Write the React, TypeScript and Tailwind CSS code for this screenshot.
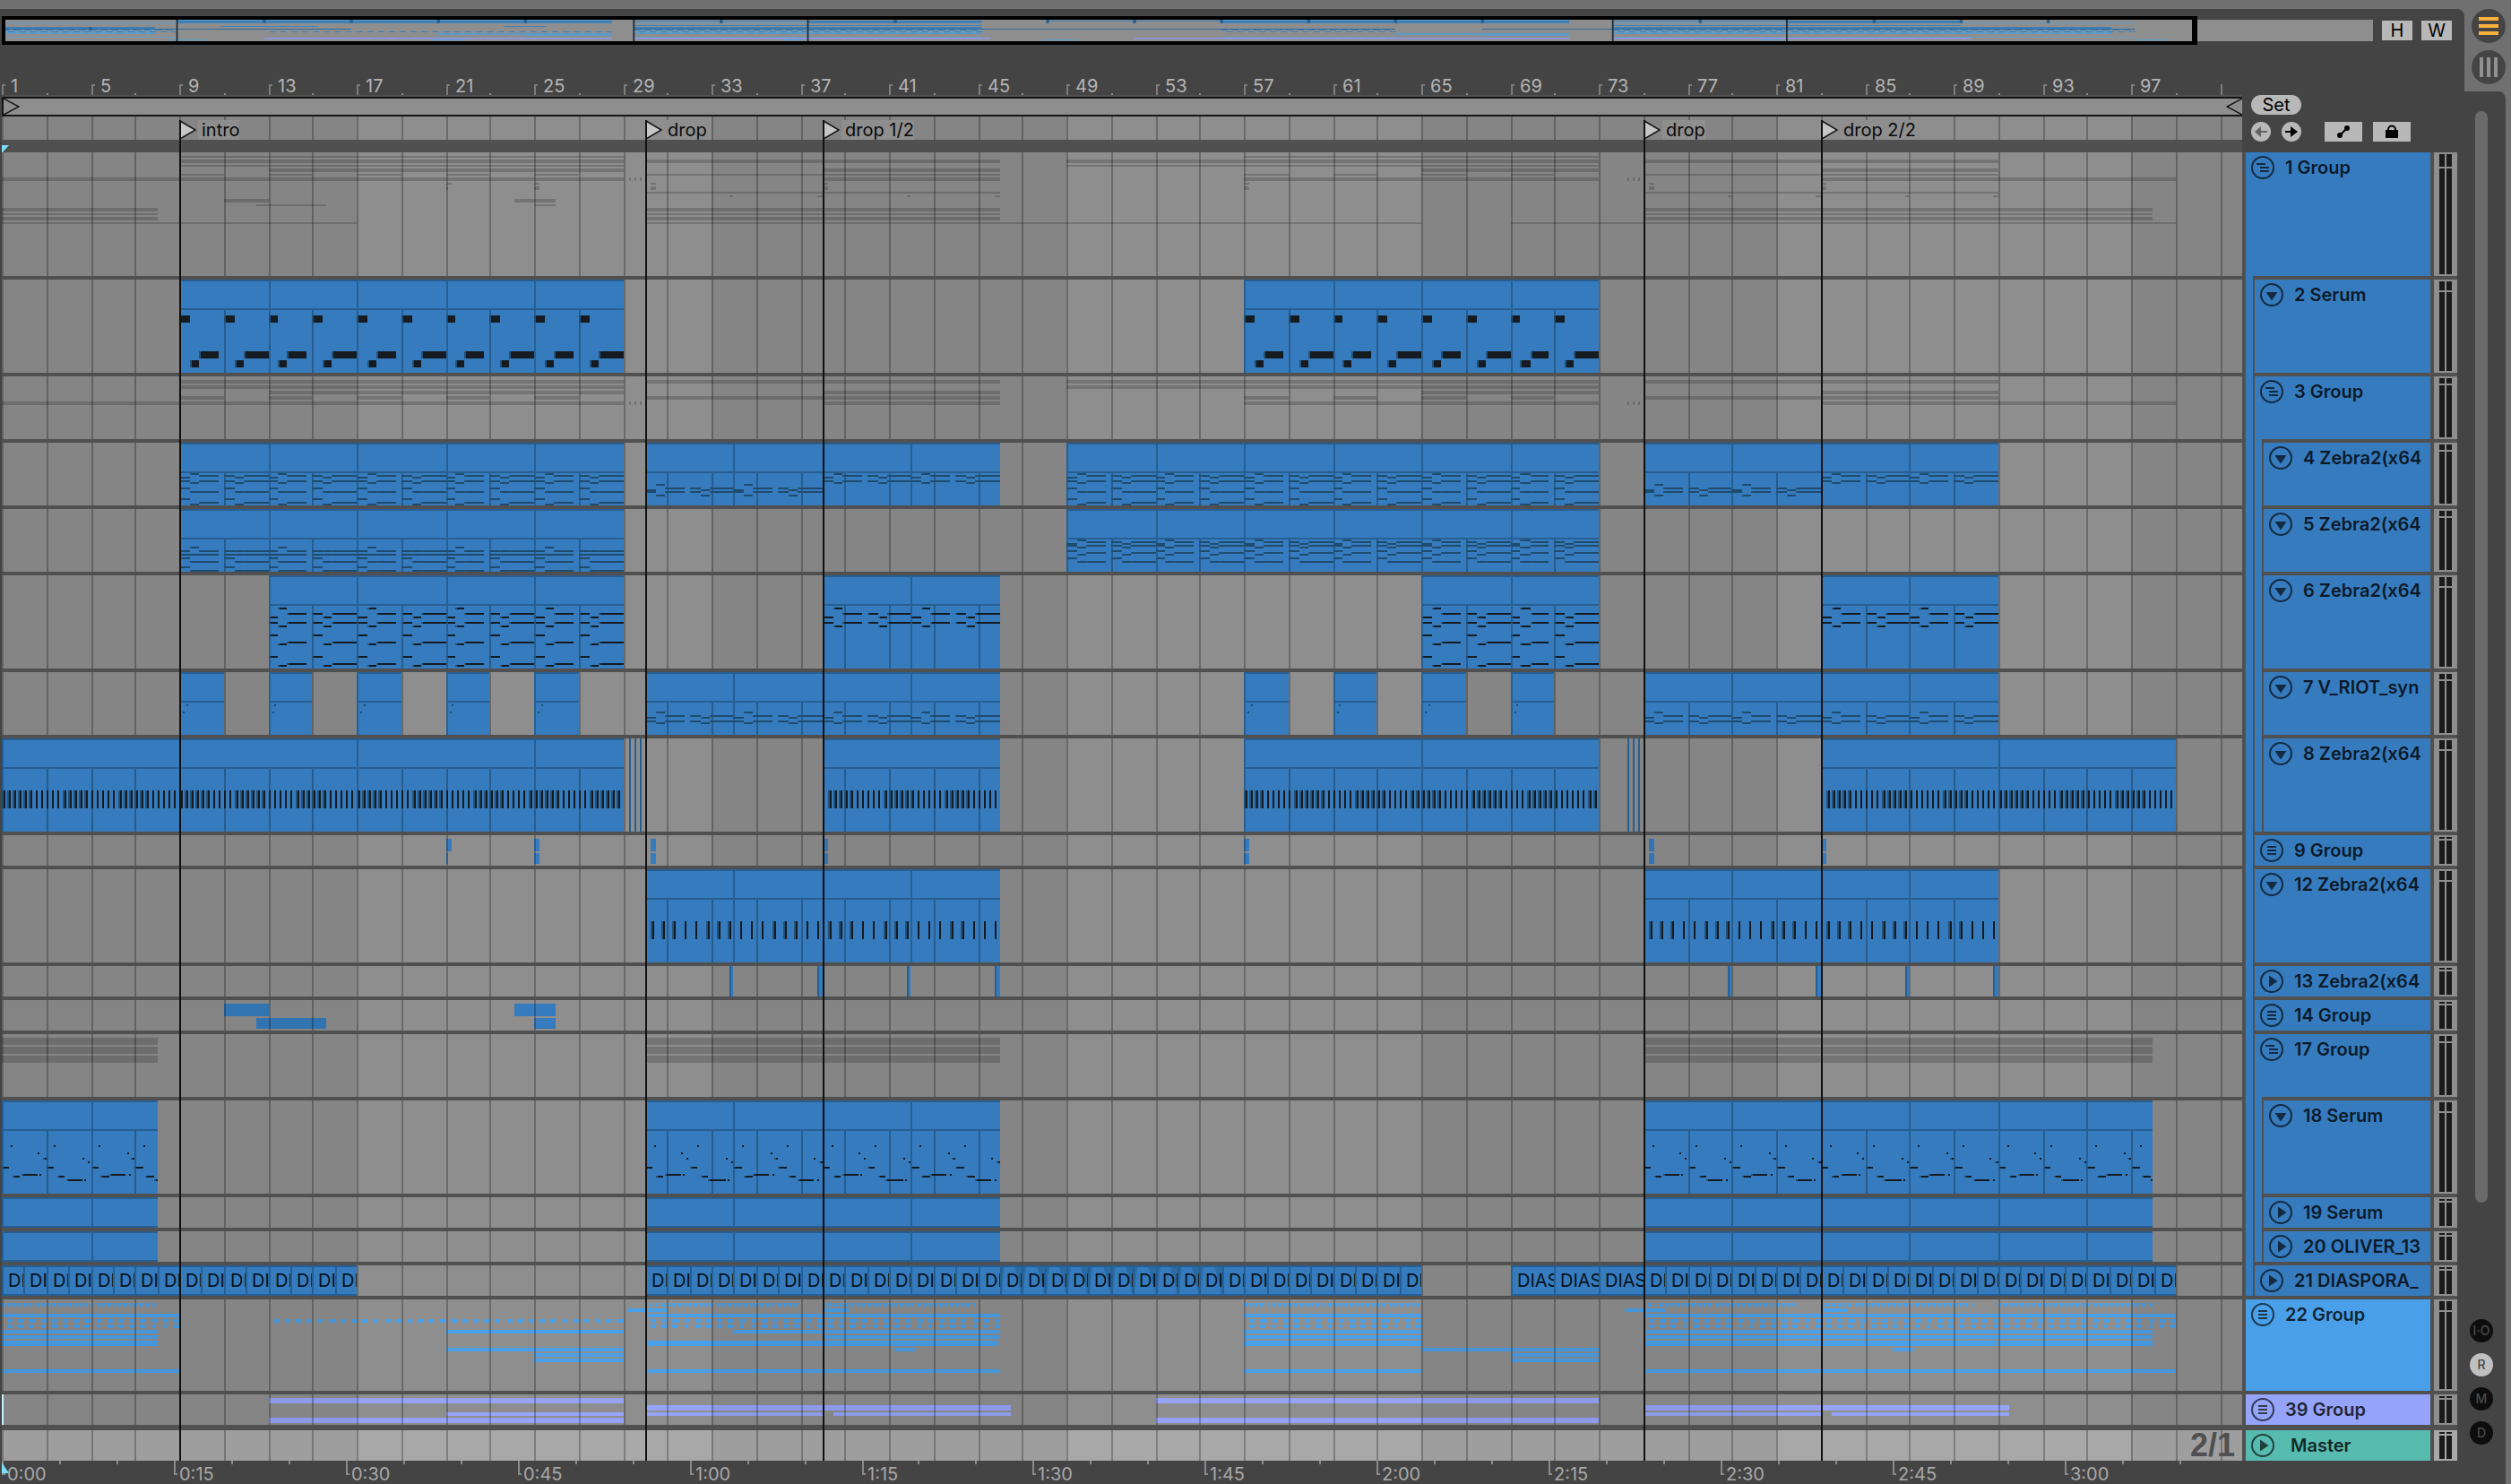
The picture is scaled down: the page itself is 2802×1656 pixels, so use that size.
import type { ReactNode } from "react";
import clsx from "clsx";

// --- Types ---
type Span = [number, number];
type Size = "xl" | "tall" | "big" | "mid" | "low";
type IconKind = "open" | "folded" | "down" | "play";

interface Note {
  start: number;
  end: number;
  y: number;
  h: number;
}

interface Bar {
  start: number;
  end: number;
  y: number;
  h: number;
}

interface Track {
  id: string;
  name: string;
  size: Size;
  icon: IconKind;
  color?: string;
  clips?: Span[];
  clipBars?: number;
  notes?: Note[];
  noteColor?: string;
  bars?: Bar[];
  barColor?: string;
  audio?: boolean;
  slivers?: Span[];
  children?: Track[];
}

// --- Time grid ---
const PX_PER_BAR = 24.755;
const LAST_BAR = 101;

// everything on the grid sits on even pixels
const toX = (bar: number) => 2 * Math.round(((bar - 1) * PX_PER_BAR) / 2);

const range = (from: number, to: number, step = 1) => {
  const out: number[] = [];
  for (let v = from; v < to - 0.001; v += step) out.push(v);
  return out;
};

const HEIGHTS: Record<Size, string> = {
  xl: "h-[138px]",
  tall: "h-[104px]",
  big: "h-[102px]",
  mid: "h-[70px]",
  low: "h-[34px]",
};

const METER_TOPS: Record<Size, string> = {
  xl: "h-3.5",
  tall: "h-2.5",
  big: "h-2.5",
  mid: "h-1.5",
  low: "h-0.5",
};

// --- Note patterns ---
const RIFF: Span[] = [
  [0, 0.47],
  [0.47, 0.875],
  [0.875, 1.75],
  [2, 2.47],
  [2.47, 2.875],
  [2.875, 4],
];

const riff = (from: number, to: number, rows: number[][], h = 2): Note[] =>
  range(from, to, 4).flatMap((bar) =>
    RIFF.flatMap(([s, e], i) => rows[i].map((y) => ({ start: bar + s, end: Math.min(bar + e, to), y, h })))
  );

const pulses = (from: number, to: number, step: number): Note[] =>
  range(from, to, step).map((start) => ({ start, end: start + 0.125, y: 58, h: 20 }));

const LEAD: [number, number, number][] = [
  [0, 0.35, 74], [0.38, 0.45, 50], [0.47, 0.83, 84], [0.87, 1.6, 82], [1.64, 1.72, 58], [1.72, 1.8, 82], [1.85, 1.98, 64],
  [2, 2.35, 74], [2.36, 2.45, 50], [2.47, 2.83, 84], [2.87, 3.6, 88], [3.62, 3.7, 64], [3.72, 3.8, 88], [3.86, 3.99, 68],
];

const lead = (from: number, to: number): Note[] =>
  range(from, to, 4).flatMap((bar) =>
    LEAD.filter(([s]) => bar + s < to).map(([s, e, y]) => ({ start: bar + s, end: Math.min(bar + e, to), y, h: 2 }))
  );

const blips = (bars: number[]): Note[] =>
  bars.flatMap((bar) => [
    { start: bar + 0.16, end: bar + 0.22, y: 44, h: 2 },
    { start: bar + 0.3, end: bar + 0.36, y: 36, h: 2 },
  ]);

const CHORDS_4 = [[38, 42, 50, 62], [34, 44, 54, 68], [36, 42, 54, 66], [36, 42, 50, 62], [38, 44, 54, 68], [36, 42, 54, 66]];
const CHORDS_4_DROP = [[52, 54], [46, 58], [50, 54], [50, 54], [52, 58], [50, 54]];
const CHORDS_4_TOP = [[38, 42], [34, 44], [36, 42], [36, 42], [38, 44], [36, 42]];
const CHORDS_5 = [[46, 50, 54, 64], [42, 50, 58, 68], [46, 50, 58, 68], [46, 50, 54, 64], [46, 50, 58, 68], [46, 50, 58, 68]];
const CHORDS_5_HIGH = [[38, 40, 46, 54], [34, 42, 50, 58], [36, 40, 48, 58], [36, 40, 46, 54], [38, 42, 50, 58], [36, 40, 48, 58]];
const CHORDS_6 = [[46, 52, 66, 90], [36, 56, 76, 100], [42, 52, 74, 98], [42, 52, 66, 90], [46, 56, 76, 100], [42, 52, 74, 98]];
const CHORDS_6_TOP = [[46, 52], [36, 56], [42, 52], [42, 52], [46, 56], [42, 52]];
const CHORDS_7 = [[50, 54], [44, 56], [48, 54], [48, 54], [50, 56], [48, 54]];
const BASS = [[40], [90], [80], [40], [90], [80]];

// --- Where each track plays ---
const T2: Span[] = [[9, 29], [57, 73]];
const T4: Span[] = [[9, 29], [30, 46], [49, 73], [75, 91]];
const T5: Span[] = [[9, 29], [49, 73]];
const T6: Span[] = [[13, 29], [38, 46], [65, 73], [83, 91]];
const STABS = [9, 13, 17, 21, 25, 57, 61, 65, 69];
const T7: Span[] = [...STABS.map((b): Span => [b, b + 2]), [30, 46], [75, 91]];
const T8: Span[] = [[1, 29], [38, 46], [57, 73], [83, 99]];
const FILLS: Span[] = [29.25, 29.5, 29.75, 74.25, 74.5, 74.75].map((b): Span => [b, b + 0.08]);
const T10: Span[] = [[21, 21.25], [25, 25.25], [30.24, 30.47], [38, 38.24], [57, 57.2], [75.24, 75.47], [83, 83.24]];
const T11: Span[] = [[21, 21.15], [25, 25.25], [30.24, 30.47], [38, 38.24], [57, 57.2], [75.24, 75.47], [83, 83.24]];
const T12: Span[] = [[30, 46], [75, 91]];
const T13: Span[] = [34, 38, 42, 46, 79, 83, 87, 91].map((b): Span => [b - 0.22, b]);
const T15: Span[] = [[11, 13], [24.1, 25.93]];
const T16: Span[] = [[12.45, 15.6], [25, 25.93]];
const T18: Span[] = [[1, 8], [30, 46], [75, 97.93]];
const T21: Span[] = [[1, 17], [30, 65], [69, 99]];

const stack = (rows: [Span[], number, number][]): Bar[] =>
  rows.flatMap(([spans, y, h]) => spans.map(([start, end]) => ({ start, end, y, h })));

const dashes = (spans: Span[], offset: number, step: number, width: number): Span[] =>
  spans.flatMap(([s, e]) => range(s + offset, e, step).map((b): Span => [b, b + width]));

const DRUMS: Span[] = [[1, 9], [30, 46], [57, 65], [75, 99]];

const PALE_BARS = stack([
  [dashes([[1, 8], [30.2, 36.8], [38, 44.8], [57, 65], [75.2, 81.9], [83, 89.9], [91, 98]], 0, 0.25, 0.16), 4, 4],
  [[[29.2, 31], [38, 39.2], [74.2, 76], [83, 84.2]], 10, 4],
  [DRUMS, 16, 4],
  [dashes([...DRUMS, [13, 29]], 0.25, 0.5, 0.25), 22, 4],
  [dashes(DRUMS, 0.25, 0.5, 0.22), 28, 4],
  [[[1, 8], [21, 29], [34, 46], [57, 65], [75, 97.93]], 34, 4],
  [[[1, 8], [38, 46], [57, 65], [75, 97.93]], 40, 4],
  [[[1, 8], [30, 45.9], [57, 65], [75, 90.9], [91, 97.93]], 46, 6],
  [[[21, 29], [41.2, 42.2], [65, 73], [86.2, 87.2]], 54, 4],
  [[[25, 29], [69, 73]], 60, 4],
  [[[25, 29], [69, 73]], 66, 4],
  [DRUMS, 78, 4],
]);

const VIOLET_BARS = stack([
  [[[13, 29], [53, 73]], 4, 6],
  [[[30, 46.47], [75, 91.5]], 12, 6],
  [[[21, 29], [30, 38], [38.45, 46.47], [75, 83], [83.45, 91.5]], 20, 4],
  [[[13, 29], [53, 73]], 26, 6],
]);

const BLUE = "#367bbd";
const GROUP_SHADE = "rgba(0,0,0,0.18)";
const DARK_NOTE = "#151b20";
const SOFT_NOTE = "#1f4b6e";

const TRACKS: Track[] = [
  {
    id: "1",
    name: "1 Group",
    size: "xl",
    icon: "open",
    barColor: GROUP_SHADE,
    bars: stack([
      [T2, 4, 2], [T4, 8, 4], [T5, 14, 2], [T6, 18, 4], [T7, 24, 2], [[...T8, ...FILLS], 28, 4],
      [T10, 34, 2], [T11, 38, 4], [T12, 44, 2], [T13, 48, 2],
      [T15, 52, 4], [T16, 58, 2], [T18, 62, 4], [T18, 68, 2], [T18, 72, 4], [T21, 78, 2],
    ]),
    children: [
      { id: "2", name: "2 Serum", size: "tall", icon: "down", clips: T2, noteColor: DARK_NOTE, notes: T2.flatMap(([s, e]) => riff(s, e, BASS, 8)) },
      {
        id: "3",
        name: "3 Group",
        size: "mid",
        icon: "open",
        barColor: GROUP_SHADE,
        bars: stack([[T4, 4, 4], [T5, 10, 4], [T6, 16, 4], [T7, 22, 4], [[...T8, ...FILLS], 28, 4]]),
        children: [
          {
            id: "4",
            name: "4 Zebra2(x64",
            size: "mid",
            icon: "down",
            clips: T4,
            notes: [
              ...riff(9, 29, CHORDS_4), ...riff(30, 38, CHORDS_4_DROP), ...riff(38, 46, CHORDS_4_TOP),
              ...riff(49, 73, CHORDS_4), ...riff(75, 83, CHORDS_4_DROP), ...riff(83, 91, CHORDS_4_TOP),
            ],
          },
          { id: "5", name: "5 Zebra2(x64", size: "mid", icon: "down", clips: T5, notes: [...riff(9, 29, CHORDS_5), ...riff(49, 73, CHORDS_5_HIGH)] },
          {
            id: "6",
            name: "6 Zebra2(x64",
            size: "tall",
            icon: "down",
            clips: T6,
            noteColor: DARK_NOTE,
            notes: [...riff(13, 29, CHORDS_6), ...riff(38, 46, CHORDS_6_TOP), ...riff(65, 73, CHORDS_6), ...riff(83, 91, CHORDS_6_TOP)],
          },
          { id: "7", name: "7 V_RIOT_syn", size: "mid", icon: "down", clips: T7, notes: [...blips(STABS), ...riff(30, 46, CHORDS_7), ...riff(75, 91, CHORDS_7)] },
          {
            id: "8",
            name: "8 Zebra2(x64",
            size: "tall",
            icon: "down",
            clips: T8,
            clipBars: 8,
            slivers: FILLS,
            noteColor: DARK_NOTE,
            notes: [...pulses(1, 29, 0.25), ...pulses(38.25, 46, 0.25), ...pulses(57, 73, 0.25), ...pulses(83.25, 99, 0.25)],
          },
        ],
      },
      { id: "9", name: "9 Group", size: "low", icon: "folded", barColor: BLUE, bars: stack([[T10, 4, 14], [T11, 20, 12]]) },
      {
        id: "12",
        name: "12 Zebra2(x64",
        size: "tall",
        icon: "down",
        clips: T12,
        noteColor: DARK_NOTE,
        notes: [...pulses(30.25, 46, 0.5), ...pulses(75.25, 91, 0.5)],
      },
      { id: "13", name: "13 Zebra2(x64", size: "low", icon: "play", slivers: T13 },
      { id: "14", name: "14 Group", size: "low", icon: "folded", barColor: BLUE, bars: stack([[T15, 4, 14], [T16, 20, 12]]) },
      {
        id: "17",
        name: "17 Group",
        size: "mid",
        icon: "open",
        barColor: GROUP_SHADE,
        bars: stack([[T18, 4, 8], [T18, 14, 8], [T18, 24, 8]]),
        children: [
          { id: "18", name: "18 Serum", size: "tall", icon: "down", clips: T18, noteColor: DARK_NOTE, notes: T18.flatMap(([s, e]) => lead(s, e)) },
          { id: "19", name: "19 Serum", size: "low", icon: "play", clips: T18 },
          { id: "20", name: "20 OLIVER_13", size: "low", icon: "play", clips: T18 },
        ],
      },
      { id: "21", name: "21 DIASPORA_", size: "low", icon: "play", audio: true, clips: T21 },
    ],
  },
  { id: "22", name: "22 Group", size: "big", icon: "folded", color: "bg-[#4aa0e8]", barColor: "#4aa0e8", bars: PALE_BARS },
  { id: "39", name: "39 Group", size: "low", icon: "folded", color: "bg-[#95a4f8]", barColor: "#95a4f8", bars: VIOLET_BARS },
];

const flatten = (tracks: Track[]): Track[] => tracks.flatMap((t) => [t, ...flatten(t.children ?? [])]);
const FLAT = flatten(TRACKS);

const LOCATORS = [
  { bar: 9, label: "intro" },
  { bar: 30, label: "drop" },
  { bar: 38, label: "drop 1/2" },
  { bar: 75, label: "drop" },
  { bar: 83, label: "drop 2/2" },
];

const TIMES = ["0:00", "0:15", "0:30", "0:45", "1:00", "1:15", "1:30", "1:45", "2:00", "2:15", "2:30", "2:45", "3:00"];
const PX_PER_TIME = 191.8;

// --- Overview strip, in bars across and 24 units down ---
const DEEP = "#3f80b6";
const SOFT = "#5c9bc9";
const OVERVIEW: [Span[], number, number, string][] = [
  [[[9, 29], [57, 73]], 0, 2, SOFT],
  [[[9, 29], [30, 46], [49, 73], [75, 91]], 1, 1, DEEP],
  [[[9, 29], [38, 46], [57, 73], [83, 91]], 2, 2, DEEP],
  [[[1, 9], [30, 38], [75, 83], [91, 99]], 3, 1, SOFT],
  [[[30, 46], [75, 91]], 6, 1, DEEP],
  [[[11, 13], [13, 15.5], [24, 26]], 7, 1, DEEP],
  [T18, 8, 2, DEEP],
  [T21, 10, 1, "#2f6a9c"],
  [dashes(DRUMS, 0, 0.5, 0.3), 11, 1, DEEP],
  [T18, 12, 1, SOFT],
  [dashes([...DRUMS, [13, 29]], 0.25, 0.5, 0.28), 13, 1, DEEP],
  [T18, 14, 2, SOFT],
  [[[21, 29], [65, 73]], 15, 2, SOFT],
  [[[25, 29], [69, 73]], 17, 1, SOFT],
  [DRUMS, 19, 1, "#6c9cbd"],
  [[[13, 29], [30, 46.4], [53, 73], [75, 91.5]], 20, 2, "#8f96d6"],
  [[[8.6, 10.3], [20.7, 22.3], [36.8, 37.8], [48.8, 50.4], [81.8, 82.7], [98.9, 100.5]], 22, 1, "#4f9fce"],
];

// --- Small pieces ---
const TrackIcon = ({ kind }: { kind: IconKind }) => (
  <svg viewBox="0 0 26 26" className="h-[26px] w-[26px]" fill="none" stroke="currentColor" strokeWidth={2}>
    <circle cx={13} cy={13} r={12} />
    {kind === "open" && <path d="M6 9h10M10 13h10M10 17h10" />}
    {kind === "folded" && <path d="M8 9h10M8 13h10M8 17h10" />}
    {kind === "down" && <path d="M6.5 10h13L13 19.5z" fill="currentColor" stroke="none" />}
    {kind === "play" && <path d="M10 6.5L19.5 13L10 19.5z" fill="currentColor" stroke="none" />}
  </svg>
);

const Shades = () => (
  <>
    {[1, 33, 65, 97].map((bar) => (
      <div
        key={bar}
        className="absolute inset-y-0 bg-black/6"
        style={{ left: toX(bar), width: bar === 97 ? 400 : toX(bar + 16) - toX(bar) }}
      />
    ))}
  </>
);

const GridLines = () => (
  <svg className="pointer-events-none absolute inset-0 h-full w-full">
    {range(1, LAST_BAR + 1, 2).map((bar) => (
      <rect key={bar} x={toX(bar)} y={0} width={2} height="100%" fill="rgba(0,0,0,0.25)" />
    ))}
  </svg>
);

const Notes = ({ notes, color }: { notes: Note[]; color: string }) => (
  <svg className="pointer-events-none absolute inset-0 h-full w-full">
    {notes.map((n, i) => {
      const left = toX(n.start);
      const width = Math.max(2, toX(n.end) - left);
      const lip = width > 2 ? 2 : 0;
      return (
        <g key={i} fill={color}>
          {lip > 0 && <rect x={left} y={n.y} width={2} height={n.h} fill="#1f4b6e" opacity={0.85} />}
          <rect x={left + lip} y={n.y} width={width - lip} height={n.h} />
        </g>
      );
    })}
  </svg>
);

const Clip = ({ start, end, low, label, faded }: { start: number; end: number; low: boolean; label?: string; faded?: boolean }) => (
  <div
    className={clsx(
      "absolute top-0 overflow-hidden border-y-2 border-l-2 border-[#265f94] bg-[#367bbd]",
      low ? "bottom-0" : "h-[34px]"
    )}
    style={{ left: toX(start), width: toX(end) - toX(start) }}
  >
    {faded && (
      <svg viewBox="0 0 22 30" className="absolute inset-0 h-full w-full" preserveAspectRatio="none">
        <path d="M14 0Q18 12 21 30H22V0z" fill="#2c6aa3" />
        <path d="M0 0H3Q1 12 0 30z" fill="#2c6aa3" />
      </svg>
    )}
    {label && <span className="relative pl-[5px] text-xl leading-[30px] text-[#06121c]">{label}</span>}
  </div>
);

const splitClips = (track: Track): Span[] => {
  if (track.audio) {
    return [
      ...range(1, 17).map((b): Span => [b, b + 1]),
      ...range(30, 65).map((b): Span => [b, b + 1]),
      ...range(69, 75, 2).map((b): Span => [b, b + 2]),
      ...range(75, 99).map((b): Span => [b, b + 1]),
    ];
  }
  const step = track.clipBars ?? 4;
  return (track.clips ?? []).flatMap(([s, e]) => range(s, e, step).map((b): Span => [b, Math.min(b + step, e)]));
};

const Lane = ({ track }: { track: Track }) => {
  const low = track.size === "low";
  return (
    <div className={clsx("relative shrink-0 overflow-hidden bg-[#8e8e8e]", HEIGHTS[track.size])}>
      {track.bars && (
        <svg className="absolute inset-0 h-full w-full" fill={track.barColor}>
          {track.bars.map((b, i) => (
            <rect key={i} x={toX(b.start)} y={b.y} width={Math.max(2, toX(b.end) - toX(b.start))} height={b.h} />
          ))}
        </svg>
      )}
      <Shades />
      {!low &&
        track.clips?.map(([s, e]) => (
          <div key={s} className="absolute inset-y-0 bg-[#367bbd]" style={{ left: toX(s), width: toX(e) - toX(s) }} />
        ))}
      <GridLines />
      {!low &&
        splitClips(track).map(([s]) => (
          <div key={s} className="absolute inset-y-0 w-0.5 bg-[#265f94]" style={{ left: toX(s) }} />
        ))}
      {splitClips(track).map(([s, e]) => (
        <Clip
          key={s}
          start={s}
          end={e}
          low={low}
          label={track.audio ? (e - s > 1 ? "DIAS" : "DI") : undefined}
          faded={track.audio && s >= 46 && s < 56}
        />
      ))}
      {track.slivers?.map(([s, e]) => (
        <div
          key={s}
          className="absolute inset-y-0 border-l-2 border-[#265f94] bg-[#367bbd]"
          style={{ left: toX(s), width: Math.max(2, toX(e) - toX(s)) }}
        />
      ))}
      {track.notes && <Notes notes={track.notes} color={track.noteColor ?? SOFT_NOTE} />}
      {track.id === "39" && <div className="absolute inset-y-0 left-0 w-0.5 bg-[#c5f3fb]" />}
    </div>
  );
};

const TrackHeader = ({ track }: { track: Track }) => {
  const color = track.color ?? "bg-[#367bbd]";
  return (
    <div>
      <div className={clsx("flex items-start gap-3 overflow-hidden pt-1 pl-1.5", HEIGHTS[track.size], color)}>
        <button type="button" aria-label={`Fold ${track.name}`} className="shrink-0 text-black/65">
          <TrackIcon kind={track.icon} />
        </button>
        <span className="text-xl leading-[26px] font-semibold whitespace-nowrap text-black/80">{track.name}</span>
      </div>
      {track.children && (
        <div className={clsx("flex", color)}>
          <div className="w-2 shrink-0" />
          <div className="flex min-w-0 flex-1 flex-col gap-1 border-l-2 border-[#505050] bg-[#505050] pt-1">
            {track.children.map((child) => (
              <TrackHeader key={child.id} track={child} />
            ))}
          </div>
        </div>
      )}
    </div>
  );
};

const Meter = ({ size, light }: { size: Size; light?: boolean }) => (
  <div className={clsx("flex justify-center gap-0.5 py-0.5", HEIGHTS[size], light ? "bg-[#a8a8a8]" : "bg-[#8e8e8e]")}>
    {[0, 1].map((i) => (
      <div key={i} className="flex w-1.5 flex-col gap-0.5">
        <div className={clsx("bg-[#1a1a1a]", METER_TOPS[size])} />
        <div className="flex-1 bg-[#1a1a1a]" />
      </div>
    ))}
  </div>
);

const GreyButton = ({ label, className, children }: { label: string; className: string; children: ReactNode }) => (
  <button
    type="button"
    aria-label={label}
    className={clsx("flex h-[22px] items-center justify-center bg-[#b8b8b8] text-xl leading-[22px] text-black", className)}
  >
    {children}
  </button>
);

const Overview = () => (
  <div className="relative h-8 flex-1 py-1">
    <svg viewBox="0 0 109 24" preserveAspectRatio="none" className="block h-6 w-full bg-[#8e8e8e]">
      {OVERVIEW.flatMap(([spans, y, h, fill], row) =>
        spans.map(([s, e]) => <rect key={`${row}-${s}`} x={s - 0.95} y={y} width={e - s} height={h} fill={fill} />)
      )}
      {LOCATORS.map(({ bar }) => (
        <rect key={bar} x={bar - 0.98} y={0} width={0.07} height={24} fill="#1c2730" />
      ))}
      {[5, 13, 17, 21, 25, 34, 42, 49, 53, 57, 61, 65, 69, 79, 87, 91, 95].map((bar) => (
        <rect key={bar} x={bar - 1} y={bar === 5 ? 8 : 0} width={0.14} height={4} fill="#2b6290" />
      ))}
    </svg>
    <div className="absolute inset-y-0 left-0 w-[92.6%] border-4 border-r-[6px] border-black" />
  </div>
);

const BarRuler = () => (
  <div className="relative h-14 overflow-hidden">
    {range(1, LAST_BAR + 1, 4).map((bar) => (
      <div key={bar} className="absolute bottom-0 h-3 w-0.5 bg-[#7c7c7c]" style={{ left: toX(bar) }}>
        {bar < LAST_BAR && (
          <>
            <div className="h-0.5 w-1 bg-[#7c7c7c]" />
            <span className="absolute bottom-0 left-2.5 text-xl leading-5 text-[#b4b4b4]">{bar}</span>
          </>
        )}
      </div>
    ))}
    {range(3, LAST_BAR, 4).map((bar) => (
      <div key={bar} className="absolute bottom-0 h-0.5 w-0.5 bg-[#8a8a8a]" style={{ left: toX(bar) }} />
    ))}
  </div>
);

const LoopBar = () => (
  <div className="flex h-[22px] items-stretch justify-between border-y-2 border-l-2 border-[#151515] bg-[#8e8e8e]">
    <svg viewBox="0 0 18 18" className="h-[18px] w-[18px]" fill="none" stroke="#151515" strokeWidth={1.5}>
      <path d="M0 0L17 9L0 18" />
    </svg>
    <svg viewBox="0 0 18 18" className="h-[18px] w-[18px]" fill="none" stroke="#151515" strokeWidth={1.5}>
      <path d="M18 0L1 9L18 18" />
    </svg>
  </div>
);

const LocatorRow = () => (
  <div className="relative h-[26px] overflow-hidden bg-[#8e8e8e]">
    <Shades />
    <GridLines />
    {LOCATORS.map(({ bar, label }) => (
      <div key={bar} className="absolute top-1 bottom-0 flex gap-0.5" style={{ left: toX(bar) }}>
        <svg viewBox="0 0 19 22" className="h-[22px] w-[19px]">
          <path d="M1 1L18 11L1 21z" fill="#c6c6c6" stroke="#151515" strokeWidth={1.5} />
        </svg>
        <span className="bg-[#8e8e8e] pl-1 text-xl leading-[22px] whitespace-nowrap text-[#0a0a0a]">{label}</span>
      </div>
    ))}
  </div>
);

const TimeRuler = () => (
  <div className="relative h-[26px] overflow-hidden bg-[#444]">
    {range(0, 39).map((i) => (
      <div
        key={i}
        className={clsx("absolute top-0 w-0.5 bg-[#8a8a8a]", i % 3 === 0 ? "h-4" : "h-1")}
        style={{ left: 2 * Math.round((i * PX_PER_TIME) / 6) }}
      >
        {i % 3 === 0 && (
          <>
            <div className="absolute bottom-0 left-0 h-0.5 w-1 bg-[#8a8a8a]" />
            <span className="absolute top-1 left-1.5 text-xl leading-[22px] text-[#a8a8a8]">{TIMES[i / 3]}</span>
          </>
        )}
      </div>
    ))}
    <svg viewBox="0 0 8 12" className="absolute top-0.5 left-0 h-3 w-2">
      <path d="M0 0L8 12H0z" fill="#7fdcf5" />
    </svg>
  </div>
);

const Timeline = () => (
  <section aria-label="Arrangement" className="min-w-0 flex-1 pl-0.5">
    <BarRuler />
    <div className="h-0.5 bg-[#505050]" />
    <LoopBar />
    <div className="relative">
      <LocatorRow />
      <div className="flex h-3.5 items-end bg-[#505050]">
        <svg viewBox="0 0 8 8" className="h-2 w-2">
          <path d="M0 0H8L1 8H0z" fill="#7fdcf5" />
        </svg>
      </div>
      <div className="flex flex-col gap-1 bg-[#505050]">
        {FLAT.map((track) => (
          <Lane key={track.id} track={track} />
        ))}
      </div>
      <div className="h-1.5 bg-[#505050]" />
      <div className="relative h-[34px] overflow-hidden bg-[#a8a8a8]">
        <Shades />
        <GridLines />
        <span className="absolute right-2 bottom-0 font-['Liberation_Sans',sans-serif] text-4xl leading-[34px] font-bold text-[#505050]">
          2/1
        </span>
      </div>
      {LOCATORS.map(({ bar }) => (
        <div key={bar} className="absolute top-1 bottom-0 w-0.5 bg-[#111]" style={{ left: toX(bar) }} />
      ))}
    </div>
    <TimeRuler />
  </section>
);

const TrackPanel = () => (
  <aside className="w-[248px] shrink-0 pt-14 pr-2">
    <div className="flex h-16 flex-col gap-2 pl-2.5">
      <GreyButton label="Set" className="w-14 rounded-full">
        Set
      </GreyButton>
      <div className="flex gap-3">
        <GreyButton label="Previous locator" className="w-[22px] rounded-full">
          <svg viewBox="0 0 22 22" className="h-[22px] w-[22px]" fill="#636363">
            <path d="M18 10H11V5L4 11L11 17V12H18z" />
          </svg>
        </GreyButton>
        <GreyButton label="Next locator" className="w-[22px] rounded-full">
          <svg viewBox="0 0 22 22" className="h-[22px] w-[22px]" fill="#000">
            <path d="M4 10H10V5L18 11L10 17V12H4z" />
          </svg>
        </GreyButton>
        <GreyButton label="Automation mode" className="ml-3.5 w-[42px]">
          <svg viewBox="0 0 42 22" className="h-[22px] w-[42px]">
            <path d="M17 15L25 7" stroke="#000" strokeWidth={2} />
            <circle cx={17} cy={15} r={3} />
            <circle cx={25} cy={7} r={3} />
          </svg>
        </GreyButton>
        <GreyButton label="Lock envelopes" className="w-[42px]">
          <svg viewBox="0 0 42 22" className="h-[22px] w-[42px]">
            <path d="M14 9H28V18H14z" />
            <path d="M17 10V8.5a4 4 0 0 1 8 0V10" fill="none" stroke="#000" strokeWidth={2} />
          </svg>
        </GreyButton>
      </div>
    </div>
    <div className="flex gap-1 bg-[#505050] pl-1">
      <div className="flex min-w-0 flex-1 flex-col gap-1">
        {TRACKS.map((track) => (
          <TrackHeader key={track.id} track={track} />
        ))}
        <div className="mt-0.5 flex h-[34px] items-start gap-[18px] bg-[#58bbb0] pt-1 pl-1.5">
          <button type="button" aria-label="Fold Master" className="text-black/65">
            <TrackIcon kind="play" />
          </button>
          <span className="text-xl leading-[26px] font-semibold text-black/80">Master</span>
        </div>
      </div>
      <div className="flex w-[26px] shrink-0 flex-col gap-1">
        {FLAT.map((track) => (
          <Meter key={track.id} size={track.size} />
        ))}
        <div className="mt-0.5">
          <Meter size="low" light />
        </div>
      </div>
    </div>
  </aside>
);

const MIXER_TOGGLES = [
  { text: "I·O", label: "Show in/out", on: false },
  { text: "R", label: "Show returns", on: true },
  { text: "M", label: "Show mixer", on: false },
  { text: "D", label: "Show delays", on: false },
];

const SideRail = () => (
  <div className="flex w-[52px] shrink-0 flex-col">
    <div className="flex h-[92px] flex-col items-center gap-2 bg-[#707070] pl-0.5">
      <button type="button" aria-label="Arrangement view" className="flex h-[38px] w-[38px] flex-col items-center justify-center gap-1 rounded-full bg-[#444]">
        <span className="h-1 w-[22px] bg-[#fbb03b]" />
        <span className="h-1 w-[22px] bg-[#fbb03b]" />
        <span className="h-1 w-[22px] bg-[#fbb03b]" />
      </button>
      <button type="button" aria-label="Session view" className="flex h-[38px] w-[38px] items-center justify-center gap-1 rounded-full bg-[#444]">
        <span className="h-[22px] w-1 bg-[#919191]" />
        <span className="h-[22px] w-1 bg-[#919191]" />
        <span className="h-[22px] w-1 bg-[#919191]" />
      </button>
    </div>
    <div className="flex flex-1 bg-[#707070] pr-1.5">
      <div className="flex flex-1 flex-col justify-between rounded-tr-lg bg-[#444] pt-[22px] pr-2 pb-11">
        <div className="h-[1218px] w-3.5 self-center rounded-full bg-[#6b6b6b]" />
        <div className="flex flex-col items-center gap-3">
          {MIXER_TOGGLES.map(({ text, label, on }) => (
            <button
              key={text}
              type="button"
              aria-label={label}
              className={clsx(
                "h-[26px] w-[26px] rounded-full text-center text-sm leading-[26px] font-medium",
                on ? "bg-[#c0c0c0] text-[#444]" : "bg-[#0d0d0d] text-[#4a4a4a]"
              )}
            >
              {text}
            </button>
          ))}
        </div>
      </div>
    </div>
  </div>
);

// --- Main Exported Component ---
export default function App() {
  return (
    <main className="flex min-h-screen bg-[#707070] pt-2.5 font-['Inter',sans-serif]">
      <div className="min-w-0 flex-1 rounded-tr-lg bg-[#444] pt-2">
        <div className="flex items-center gap-2.5 pr-3.5 pl-0.5">
          <Overview />
          <GreyButton label="Optimize height" className="w-[34px]">
            H
          </GreyButton>
          <GreyButton label="Optimize width" className="w-[34px]">
            W
          </GreyButton>
        </div>
        <div className="flex">
          <Timeline />
          <TrackPanel />
        </div>
      </div>
      <SideRail />
    </main>
  );
}
